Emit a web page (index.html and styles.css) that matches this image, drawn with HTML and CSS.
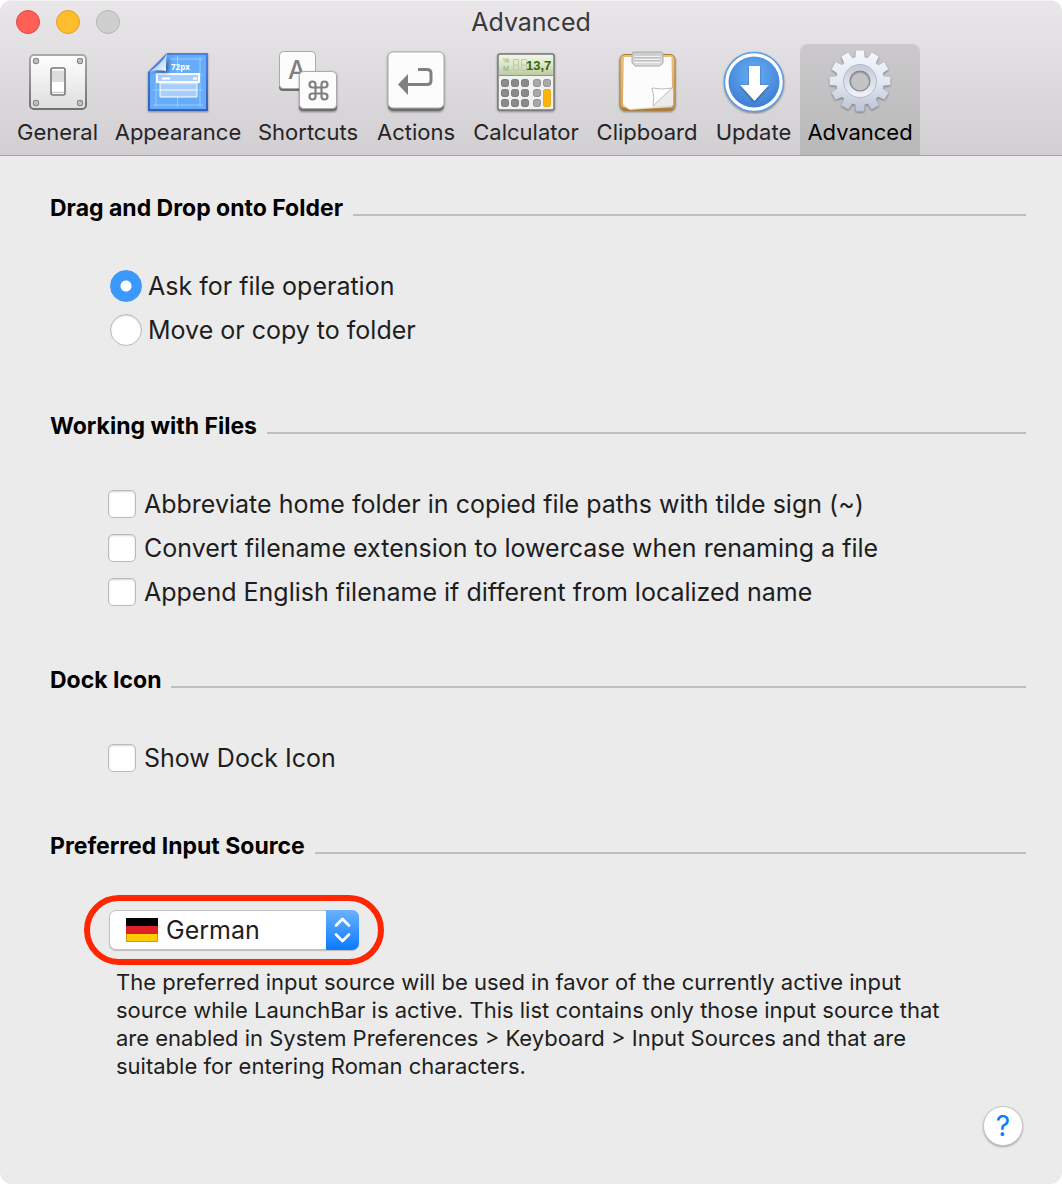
FILE: index.html
```html
<!DOCTYPE html>
<html lang="en">
<head>
<meta charset="utf-8">
<title>Advanced</title>
<meta name="viewport" content="width=device-width, initial-scale=1">
<link rel="stylesheet" href="styles.css">
</head>
<body>
<div class="window">
  <header class="chrome">
    <div class="titlebar">
      <div class="lights">
        <button class="light close" type="button" aria-label="Close"></button>
        <button class="light minimize" type="button" aria-label="Minimize"></button>
        <button class="light zoom" type="button" aria-label="Zoom" disabled></button>
      </div>
      <h1 class="title">Advanced</h1>
    </div>
    <nav class="toolbar" aria-label="Preferences">
      <button class="tool" type="button">
        <svg class="icon" viewBox="0 0 64 64" aria-hidden="true">
          <defs>
            <linearGradient id="plate" x2="0" y2="1"><stop offset="0" stop-color="#fff"/><stop offset="1" stop-color="#dedede"/></linearGradient>
            <linearGradient id="plateEdge" x2="0" y2="1"><stop offset="0" stop-color="#a8a8a8"/><stop offset="1" stop-color="#727272"/></linearGradient>
          </defs>
          <rect x="4" y="5" width="56" height="54" rx="4" fill="url(#plate)" stroke="url(#plateEdge)" stroke-width="2"/>
          <g fill="#d2d2d2" stroke="#888" stroke-width="1.2"><circle cx="10" cy="11" r="2.6"/><circle cx="54" cy="11" r="2.6"/><circle cx="10" cy="53" r="2.6"/><circle cx="54" cy="53" r="2.6"/></g>
          <path d="M8.500 12.500l3-3M52.500 12.500l3-3M8.500 54.500l3-3M52.500 54.500l3-3" stroke="#999" stroke-width=".8"/>
          <rect x="25" y="18" width="14" height="27" rx="2" fill="#fff" stroke="#777" stroke-width="1.600"/>
          <path d="M26 20.500h12V32H26z" fill="#dcdcdc"/>
          <path d="M26 42.500h12" stroke="#ccc" stroke-width="1.500"/>
        </svg>
        <span>General</span>
      </button>
      <button class="tool" type="button">
        <svg class="icon" viewBox="0 0 64 64" aria-hidden="true">
          <defs>
            <linearGradient id="blueEdge" x2="0" y2="1"><stop offset="0" stop-color="#4a7fe6"/><stop offset="1" stop-color="#365fb8"/></linearGradient>
            <linearGradient id="curl" x1=".3" y1=".3" x2="1" y2="1"><stop offset="0" stop-color="#8db8f2"/><stop offset=".4" stop-color="#c5daf6"/><stop offset="1" stop-color="#f8fbff"/></linearGradient>
          </defs>
          <g class="cast">
            <path d="M21 3h41v58H2V22z" fill="url(#blueEdge)"/>
            <path d="M21 5h39v54H4V22z" fill="#65acfb"/>
          </g>
          <path d="M10 23v34M31.500 6v51M54 7v50M24 9h33M7 40h50M7 55h50M7 25h50" stroke="#a0cafa" stroke-width="1"/>
          <g fill="#a8cffc" stroke="#fff"><path d="M11 24h42v8H11z" stroke-width="2"/><path d="M14 33h37v14H14zM14 40h37" stroke-width="1"/></g>
          <path d="M16 28.500h8M47 28.500h4" stroke="#fff" stroke-width="2"/>
          <path class="curl" d="M2 22C9 19 18 11 21 3c-1 7-1 12-1 18-6-1-12-1-18 1z" fill="url(#curl)"/>
          <text class="px-label" x="25" y="20">72px</text>
        </svg>
        <span>Appearance</span>
      </button>
      <button class="tool" type="button">
        <svg class="icon" viewBox="0 0 64 64" aria-hidden="true">
          <rect x="3" y="3" width="37" height="38" rx="4" fill="#6e6e6e"/>
          <rect x="3.500" y="1.500" width="36" height="37" rx="4" fill="#fcfcfc" stroke="#aaa" stroke-width="1"/>
          <text class="key-label" x="12" y="29">A</text>
          <g class="cast">
            <rect x="23" y="23" width="38" height="38" rx="4" fill="#6e6e6e"/>
            <rect x="23.500" y="21.500" width="37" height="37" rx="4" fill="#fcfcfc" stroke="#aaa" stroke-width="1"/>
          </g>
          <path d="M39.500 37.500h6v6h-6zM39.500 37.500h-3a3 3 0 1 1 3-3zM45.500 37.500v-3a3 3 0 1 1 3 3zM45.500 43.500h3a3 3 0 1 1-3 3zM39.500 43.500v3a3 3 0 1 1-3-3z" fill="none" stroke="#808080" stroke-width="2.200"/>
        </svg>
        <span>Shortcuts</span>
      </button>
      <button class="tool" type="button">
        <svg class="icon" viewBox="0 0 64 64" aria-hidden="true">
          <g class="cast">
            <rect x="4" y="4" width="56" height="57" rx="5" fill="#6e6e6e"/>
            <rect x="4" y="2" width="56" height="56" rx="5" fill="#fcfcfc" stroke="#aaa" stroke-width="1"/>
          </g>
          <path d="M34 19.500h9q4 0 4 4v7q0 4-4 4H22" fill="none" stroke="#808080" stroke-width="3"/>
          <path d="M14 34.500L24 24v21z" fill="#808080"/>
        </svg>
        <span>Actions</span>
      </button>
      <button class="tool" type="button">
        <svg class="icon" viewBox="0 0 64 64" aria-hidden="true">
          <defs>
            <linearGradient id="lcd" x2="0" y2="1"><stop offset="0" stop-color="#f0f6e5"/><stop offset=".5" stop-color="#dbe5c7"/><stop offset="1" stop-color="#bccaa1"/></linearGradient>
          </defs>
          <g class="cast"><rect x="4" y="4" width="56" height="56" rx="2" fill="#f1f1f1" stroke="#777" stroke-width="1.500"/></g>
          <path d="M5 5h54v20H5z" fill="url(#lcd)"/>
          <path d="M4 25.500h56" stroke="#8b9a78"/>
          <text class="lcd-small" x="9" y="13">%</text>
          <text class="lcd-small" x="9" y="21">M</text>
          <g fill="none" stroke="#bdc9aa" stroke-width="1"><path d="M19.500 9.500h5v11h-5zM19.500 15h5M27.500 9.500h5v11h-5zM27.500 15h5"/></g>
          <text class="lcd-digits" x="32" y="20">13,7</text>
          <g fill="#8b8b8b" stroke="#686868" stroke-width=".8">
            <rect x="7.500" y="29.500" width="7" height="7" rx="2"/><rect x="17.500" y="29.500" width="7" height="7" rx="2"/><rect x="27.500" y="29.500" width="7" height="7" rx="2"/>
            <rect x="7.500" y="39.500" width="7" height="7" rx="2"/><rect x="17.500" y="39.500" width="7" height="7" rx="2"/><rect x="27.500" y="39.500" width="7" height="7" rx="2"/>
            <rect x="7.500" y="49.500" width="7" height="7" rx="2"/><rect x="17.500" y="49.500" width="7" height="7" rx="2"/><rect x="27.500" y="49.500" width="7" height="7" rx="2"/>
          </g>
          <g fill="#a9a9a9" stroke="#828282" stroke-width=".8">
            <rect x="39.500" y="29.500" width="7" height="7" rx="2"/><rect x="49.500" y="29.500" width="7" height="7" rx="2"/>
            <rect x="39.500" y="39.500" width="7" height="7" rx="2"/><rect x="39.500" y="49.500" width="7" height="7" rx="2"/>
          </g>
          <rect x="49.500" y="39.500" width="7" height="17" rx="1.500" fill="#ffb40a" stroke="#eda000" stroke-width=".8"/>
        </svg>
        <span>Calculator</span>
      </button>
      <button class="tool" type="button">
        <svg class="icon" viewBox="0 0 64 64" aria-hidden="true">
          <defs>
            <linearGradient id="wood" x2="0" y2="1"><stop offset="0" stop-color="#e5c184"/><stop offset=".92" stop-color="#d5a860"/><stop offset="1" stop-color="#9a6c26"/></linearGradient>
            <linearGradient id="clip" x2="0" y2="1"><stop offset="0" stop-color="#ccc"/><stop offset="1" stop-color="#ddd"/></linearGradient>
          </defs>
          <g class="cast"><rect x="5" y="4.500" width="55" height="56" rx="5" fill="url(#wood)" stroke="#ab7f3c"/></g>
          <path d="M9 7h48v50l-42 3-7-4z" fill="#e0dcd4"/>
          <path d="M9 7h47l1 31-19 19-24 2-6-5z" fill="#fcfcfc"/>
          <path d="M37 38q11 2 20 0L38 56q2-10-1-18z" fill="#fff" stroke="#bbb"/>
          <path d="M38 57L58 38v17z" fill="#ececec"/>
          <path d="M17 3q1-1 3-1h26q2 0 2 2v9l-3 3H20l-3-3z" fill="url(#clip)" stroke="#aaa"/>
          <path d="M20 6.500h25M20 9.500h25M20 12.500h25" stroke="#f1f1f1" stroke-width="1"/>
          <path d="M20 7.500h25M20 10.500h25" stroke="#b4b4b4" stroke-width=".7"/>
        </svg>
        <span>Clipboard</span>
      </button>
      <button class="tool" type="button">
        <svg class="icon" viewBox="0 0 64 64" aria-hidden="true">
          <defs>
            <radialGradient id="disc" cy=".35" r=".7"><stop offset="0" stop-color="#67b0f7"/><stop offset="1" stop-color="#3b7bd0"/></radialGradient>
          </defs>
          <circle class="cast" cx="32" cy="32" r="29.500" fill="#fff" stroke="#5a9fe8" stroke-width="1.500"/>
          <circle cx="32" cy="32" r="25.500" fill="url(#disc)"/>
          <path class="cast" d="M27 16h11v19h9L32.500 51 18 35h9z" fill="#fff"/>
        </svg>
        <span>Update</span>
      </button>
      <button class="tool selected" type="button" aria-current="page">
        <svg class="icon" viewBox="0 0 64 64" aria-hidden="true">
          <defs>
            <linearGradient id="steel" x2="0" y2="1"><stop offset="0" stop-color="#f5f8fd"/><stop offset=".5" stop-color="#e2e7f3"/><stop offset="1" stop-color="#b9bfd5"/></linearGradient>
            <linearGradient id="hub" x2="0" y2="1"><stop offset="0" stop-color="#c8cdd9"/><stop offset="1" stop-color="#eef0f6"/></linearGradient>
            <path id="tooth" d="M28 .500h8l1 10H27zM27 52.500h10l-1 9h-8z"/>
            <clipPath id="gear">
              <circle cx="32" cy="31" r="24"/>
              <use href="#tooth"/>
              <use href="#tooth" transform="rotate(30 32 31)"/>
              <use href="#tooth" transform="rotate(60 32 31)"/>
              <use href="#tooth" transform="rotate(90 32 31)"/>
              <use href="#tooth" transform="rotate(120 32 31)"/>
              <use href="#tooth" transform="rotate(150 32 31)"/>
            </clipPath>
          </defs>
          <g class="cast"><path d="M0 0h64v64H0zM32 21a10 10 0 1 0 0 20 10 10 0 1 0 0-20z" fill-rule="evenodd" fill="url(#steel)" clip-path="url(#gear)"/></g>
          <circle cx="32" cy="31" r="13.500" fill="none" stroke="url(#hub)" stroke-width="6"/>
          <circle cx="32" cy="31" r="16.500" fill="none" stroke="#aab0bf" stroke-width=".8"/>
          <circle cx="32" cy="31" r="10" fill="none" stroke="#858994" stroke-width="1.200"/>
        </svg>
        <span>Advanced</span>
      </button>
    </nav>
  </header>

  <main class="content">
    <section class="group choices">
      <h2 class="heading">Drag and Drop onto Folder</h2>
      <label class="option"><input class="radio" type="radio" name="drop" checked>Ask for file operation</label>
      <label class="option"><input class="radio" type="radio" name="drop">Move or copy to folder</label>
    </section>
    <section class="group">
      <h2 class="heading">Working with Files</h2>
      <label class="option"><input class="check" type="checkbox">Abbreviate home folder in copied file paths with tilde sign (~)</label>
      <label class="option"><input class="check" type="checkbox">Convert filename extension to lowercase when renaming a file</label>
      <label class="option"><input class="check" type="checkbox">Append English filename if different from localized name</label>
    </section>
    <section class="group">
      <h2 class="heading">Dock Icon</h2>
      <label class="option"><input class="check" type="checkbox">Show Dock Icon</label>
    </section>
    <section class="group source">
      <h2 class="heading" id="source-title">Preferred Input Source</h2>
      <div class="popup">
        <select class="select" aria-labelledby="source-title" aria-describedby="source-note"><option>German</option></select>
        <svg class="flag" viewBox="0 0 32 24" aria-hidden="true"><path d="M0 0h32v8H0z"/><path d="M0 8h32v8H0z" fill="#e01f27"/><path d="M0 16h32v8H0z" fill="#fc0"/><path d="M.500 16v7.500h31V16" fill="none" stroke="#b08c00" stroke-opacity=".7"/></svg>
        <svg class="stepper" viewBox="0 0 33 40" aria-hidden="true"><path d="M10 15.500l6.500-6.500 6.500 6.500M10 24.500l6.500 6.500 6.500-6.500" fill="none" stroke="#fff" stroke-width="2.800" stroke-linecap="round" stroke-linejoin="round"/></svg>
      </div>
      <p class="note" id="source-note">The preferred input source will be used in favor of the currently active input source while LaunchBar is active. This list contains only those input source that are enabled in System Preferences &gt; Keyboard &gt; Input Sources and that are suitable for entering Roman characters.</p>
    </section>
    <button class="help" type="button" aria-label="Help">?</button>
  </main>
</div>
</body>
</html>
```
FILE: styles.css
```css
* { box-sizing: border-box; }

body {
  margin: 0;
  background: #fff;
  color: #1e1e1e;
  font-family: Inter, "Liberation Sans", sans-serif;
  font-size: 25px;
}

button, select, input { margin: 0; font: inherit; color: inherit; }
h1, h2, p { margin: 0; }

.window {
  display: flex;
  flex-direction: column;
  min-height: 100vh;
  overflow: hidden;
  border-radius: 12px;
  background: #ebebeb;
}

/* Title bar and toolbar */
.chrome {
  background: linear-gradient(#e9e7e9, #d1cfd1);
  border-bottom: 1px solid #a5a3a5;
  box-shadow: inset 0 1px #f5f4f5;
}
.titlebar {
  display: grid;
  grid-template-columns: 1fr auto 1fr;
  align-items: center;
  height: 44px;
  padding: 0 16px;
}
.lights { display: flex; gap: 16px; }
.light {
  width: 24px;
  height: 24px;
  padding: 0;
  border: 1px solid;
  border-radius: 50%;
}
.close { background: #ff5f57; border-color: #e2463f; }
.minimize { background: #ffbd2e; border-color: #dfa023; }
.zoom { background: #cfcfcf; border-color: #b4b4b4; }
.title { font-size: 25px; font-weight: 400; line-height: 30px; color: #3a383a; }

.toolbar {
  display: grid;
  grid-template-columns: 99px 142px 118px 98px 122px 120px 93px 120px;
  padding-left: 8px;
}
.tool {
  display: flex;
  flex-direction: column;
  align-items: center;
  gap: 4px;
  padding: 6px 0 9px;
  border: 0;
  border-radius: 8px 8px 0 0;
  background: none;
  font-size: 22px;
  line-height: 28px;
  color: #262426;
  white-space: nowrap;
}
.selected { background: linear-gradient(#cbc9cb, #b9b8b9); color: #000; }
.icon { display: block; width: 64px; height: 64px; }
.cast { filter: drop-shadow(0 1px 1px rgba(0, 0, 0, .4)); }
.curl { filter: drop-shadow(2px 2px 2px rgba(10, 50, 100, .7)); }
.px-label { font: 700 8px "Open Sans", sans-serif; fill: #fff; }
.key-label { font: 500 25px Inter, sans-serif; fill: #808080; }
.lcd-small { font: 7px "Liberation Sans", sans-serif; fill: #91a079; }
.lcd-digits { font: 700 13px "Liberation Sans", sans-serif; fill: #2f6a08; }

/* Settings */
.content {
  display: flex;
  flex: 1;
  flex-direction: column;
  padding: 38px 36px 38px 50px;
}
.group { margin-bottom: 52px; }
.choices { margin-bottom: 60px; }
.source { margin-bottom: 26px; }
.heading {
  display: flex;
  align-items: center;
  gap: 10px;
  margin-bottom: 42px;
  font-size: 23px;
  font-weight: 700;
  line-height: 28px;
  color: #000;
}
.heading::after {
  content: "";
  flex: 1;
  height: 2px;
  margin-top: 14px;
  background: #bebebe;
}
.option {
  display: flex;
  align-items: center;
  min-height: 44px;
  padding-left: 58px;
}
.radio, .check {
  flex: none;
  appearance: none;
  background: #fff;
  border: 1px solid #b9b9b9;
  box-shadow: inset 0 1px 2px rgba(0, 0, 0, .16);
}
.radio {
  width: 32px;
  height: 32px;
  margin: 0 6px 0 2px;
  border-radius: 50%;
}
.radio:checked {
  border-color: #3b99fc;
  background: radial-gradient(circle, #fff 5px, #3b99fc 6px);
  box-shadow: none;
}
.check {
  width: 28px;
  height: 28px;
  margin-right: 8px;
  border-radius: 5px;
}
.source .heading { margin-bottom: 50px; }
.popup {
  position: relative;
  width: 250px;
  height: 40px;
  margin-left: 59px;
}
/* Callout ring round the pop-up menu */
.popup::before {
  content: "";
  position: absolute;
  inset: -15px -25px;
  border: 6px solid #ff2600;
  border-radius: 35px;
  pointer-events: none;
}
.select {
  appearance: none;
  width: 100%;
  height: 100%;
  padding: 0 40px 0 56px;
  border: 1px solid #c3c3c3;
  border-radius: 7px;
  background: #fff;
  box-shadow: 0 1px 1px rgba(0, 0, 0, .2);
}
.flag {
  position: absolute;
  left: 17px;
  top: 8px;
  width: 32px;
  height: 24px;
  pointer-events: none;
}
.stepper {
  position: absolute;
  right: 0;
  top: 0;
  width: 33px;
  height: 40px;
  border-radius: 0 7px 7px 0;
  background: linear-gradient(#6bb2fb, #0a7aff);
  pointer-events: none;
}
.note {
  max-width: 850px;
  margin: 18px 0 0 66px;
  font-size: 22px;
  line-height: 28px;
}
.help {
  align-self: flex-end;
  width: 40px;
  height: 40px;
  margin-right: 3px;
  padding: 0;
  border: 1px solid #c6c6c6;
  border-radius: 50%;
  background: #fff;
  box-shadow: 0 1px 2px rgba(0, 0, 0, .3);
  font-size: 28px;
  line-height: 36px;
  color: #0a7aff;
}
```
